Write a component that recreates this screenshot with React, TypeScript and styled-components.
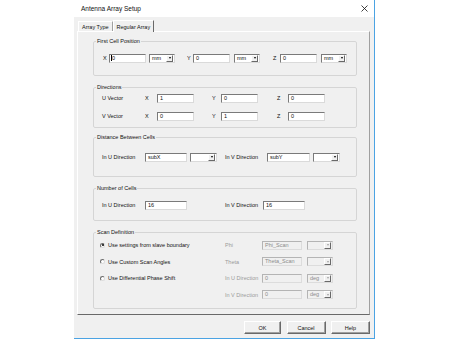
import React from "react";
import styled, { createGlobalStyle } from "styled-components";

const GlobalStyle = createGlobalStyle`
  html, body {
    margin: 0;
    padding: 0;
    background: #fff;
  }
  body {
    font-family: "Liberation Sans", Arial, sans-serif;
    font-size: 5.5px;
    color: #111;
  }
  * {
    box-sizing: border-box;
  }
`;

const Stage = styled.div`
  width: 450px;
  height: 339px;
  padding-left: 74px;
  display: flex;
  overflow: hidden;
`;

const Dialog = styled.div`
  width: 301px;
  height: 339px;
  background: #f0f0f0;
  border-right: 1px solid #4ba3e3;
  border-bottom: 1px solid #4ba3e3;
  display: flex;
  flex-direction: column;
`;

const TitleBar = styled.div`
  height: 17px;
  flex: none;
  background: #fff;
  display: flex;
  align-items: center;
  justify-content: space-between;
  padding: 0 6px 0 7px;
`;

const Title = styled.span`
  font-size: 6.5px;
  line-height: 8px;
`;

const TabStrip = styled.div`
  height: 14px;
  flex: none;
  display: flex;
  align-items: flex-end;
  padding-left: 4px;
`;

const Tab = styled.div<{ $active?: boolean }>`
  height: ${(p) => (p.$active ? 12 : 10)}px;
  padding: 0 3px;
  display: flex;
  align-items: center;
  line-height: 8px;
  white-space: nowrap;
  border-top: 1px solid #fff;
  border-left: 1px solid #fff;
  border-right: 1px solid ${(p) => (p.$active ? "#696969" : "#a0a0a0")};
  margin-bottom: ${(p) => (p.$active ? -1 : 0)}px;
  background: #f0f0f0;
  position: relative;
`;

const Panel = styled.div`
  height: 284px;
  flex: none;
  margin: 0 4px 0 3px;
  border-top: 1px solid #fff;
  border-left: 1px solid #fff;
  border-right: 1px solid #a0a0a0;
  border-bottom: 1px solid #696969;
  padding: 5px 12px 0 15px;
  display: flex;
  flex-direction: column;
`;

const Group = styled.fieldset<{ $h: number; $mt: number; $pt: number }>`
  margin: ${(p) => p.$mt}px 0 0 0;
  height: ${(p) => p.$h}px;
  min-width: 0;
  padding: ${(p) => p.$pt}px 0 0 0;
  border: 1px solid #d5d5d5;
  border-radius: 2px;
  flex: none;
`;

const Legend = styled.legend`
  margin-left: 2px;
  padding: 0 1px;
  line-height: 8px;
  font-size: 5.5px;
`;

const Rows = styled.div<{ $gap?: number; $pl: number }>`
  display: flex;
  flex-direction: column;
  gap: ${(p) => p.$gap ?? 0}px;
  padding-left: ${(p) => p.$pl}px;
`;

const Row = styled.div`
  height: 10px;
  display: flex;
  align-items: center;
`;

const Label = styled.span<{ $w: number; $ml?: number; $off?: boolean }>`
  width: ${(p) => p.$w}px;
  margin-left: ${(p) => p.$ml ?? 0}px;
  flex: none;
  white-space: nowrap;
  line-height: 8px;
  color: ${(p) => (p.$off ? "#9a9a9a" : "#111")};
`;

const TextBox = styled.div<{ $w: number; $ml?: number; $off?: boolean; $focus?: boolean }>`
  width: ${(p) => p.$w}px;
  margin-left: ${(p) => p.$ml ?? 0}px;
  height: 9px;
  flex: none;
  background: ${(p) => (p.$off ? "#f0f0f0" : "#fff")};
  border: 1px solid;
  border-color: ${(p) =>
    p.$off ? "#b4b4b4 #dcdcdc #dcdcdc #b4b4b4" : "#7a7a7a #dadada #dadada #7a7a7a"};
  color: ${(p) => (p.$off ? "#8c8c8c" : "#111")};
  padding-left: ${(p) => (p.$focus ? 1 : 2)}px;
  line-height: 7px;
  white-space: nowrap;
  overflow: hidden;
  display: flex;
  align-items: center;

  &::before {
    content: "";
    display: ${(p) => (p.$focus ? "block" : "none")};
    width: 1px;
    height: 6px;
    background: #000;
  }
`;

const Combo = styled.div<{ $w: number; $ml?: number; $off?: boolean }>`
  width: ${(p) => p.$w}px;
  margin-left: ${(p) => p.$ml ?? 0}px;
  height: 9px;
  flex: none;
  background: ${(p) => (p.$off ? "#f0f0f0" : "#fff")};
  border: 1px solid;
  border-color: ${(p) =>
    p.$off ? "#b4b4b4 #dcdcdc #dcdcdc #b4b4b4" : "#7a7a7a #dadada #dadada #7a7a7a"};
  color: ${(p) => (p.$off ? "#8c8c8c" : "#111")};
  display: flex;
  align-items: center;
  justify-content: space-between;
  padding: 0 1px 0 2px;
  line-height: 7px;
`;

const DropButton = styled.div<{ $off?: boolean }>`
  width: 7px;
  height: 7px;
  background: #f0f0f0;
  border: 1px solid;
  border-color: #fff #696969 #696969 #fff;
  display: flex;
  align-items: center;
  justify-content: center;

  &::after {
    content: "";
    border-left: 1.5px solid transparent;
    border-right: 1.5px solid transparent;
    border-top: 2px solid ${(p) => (p.$off ? "#a0a0a0" : "#000")};
  }
`;

const Radio = styled.span<{ $on?: boolean }>`
  width: 5px;
  height: 5px;
  flex: none;
  border-radius: 50%;
  background: #fff;
  border: 1px solid;
  border-color: #6a6a6a #dcdcdc #dcdcdc #6a6a6a;
  margin-right: 3px;
  display: flex;
  align-items: center;
  justify-content: center;

  &::after {
    content: "";
    display: ${(p) => (p.$on ? "block" : "none")};
    width: 2px;
    height: 2px;
    border-radius: 50%;
    background: #000;
  }
`;

const ScanGrid = styled.div`
  display: grid;
  grid-template-columns: 125px 1fr;
  grid-template-rows: repeat(4, 10px);
  row-gap: 6.67px;
  padding-left: 6px;
`;

const Cell = styled.div<{ $col: number; $row: number }>`
  grid-column: ${(p) => p.$col};
  grid-row: ${(p) => p.$row};
  display: flex;
  align-items: center;
  white-space: nowrap;
  line-height: 8px;
`;

const ButtonBar = styled.div`
  flex: 1;
  display: flex;
  justify-content: flex-end;
  align-items: flex-start;
  gap: 5.5px;
  padding: 6px 4px 0 0;
`;

const Button = styled.div<{ $w: number }>`
  width: ${(p) => p.$w}px;
  height: 13px;
  background: #f0f0f0;
  border: 1px solid;
  border-color: #fff #696969 #696969 #fff;
  box-shadow: inset -1px -1px 0 #a0a0a0;
  display: flex;
  align-items: center;
  justify-content: center;
  line-height: 8px;
`;

function Close() {
  return (
    <svg width="7" height="7" viewBox="0 0 7 7">
      <path d="M0.5 0.5 L6.5 6.5 M6.5 0.5 L0.5 6.5" stroke="#111" strokeWidth="0.8" />
    </svg>
  );
}

function Select({ w, ml, value = "", off }: { w: number; ml?: number; value?: string; off?: boolean }) {
  return (
    <Combo $w={w} $ml={ml} $off={off}>
      <span>{value}</span>
      <DropButton $off={off} />
    </Combo>
  );
}

export default function App() {
  return (
    <>
      <GlobalStyle />
      <Stage>
        <Dialog>
          <TitleBar>
            <Title>Antenna Array Setup</Title>
            <Close />
          </TitleBar>
          <TabStrip>
            <Tab>Array Type</Tab>
            <Tab $active>Regular Array</Tab>
          </TabStrip>
          <Panel>
            <Group $h={39} $mt={0} $pt={8}>
              <Legend>First Cell Position</Legend>
              <Rows $pl={9}>
                <Row>
                  <Label $w={6}>X</Label>
                  <TextBox $w={37} $focus>0</TextBox>
                  <Select w={26} ml={3} value="mm" />
                  <Label $w={6} $ml={12}>Y</Label>
                  <TextBox $w={37}>0</TextBox>
                  <Select w={26} ml={4} value="mm" />
                  <Label $w={7} $ml={13}>Z</Label>
                  <TextBox $w={37}>0</TextBox>
                  <Select w={26} ml={4} value="mm" />
                </Row>
              </Rows>
            </Group>

            <Group $h={45} $mt={7} $pt={2}>
              <Legend>Directions</Legend>
              <Rows $gap={8} $pl={8}>
                <Row>
                  <Label $w={43}>U Vector</Label>
                  <Label $w={12}>X</Label>
                  <TextBox $w={37}>1</TextBox>
                  <Label $w={9} $ml={18}>Y</Label>
                  <TextBox $w={37}>0</TextBox>
                  <Label $w={11} $ml={19}>Z</Label>
                  <TextBox $w={37}>0</TextBox>
                </Row>
                <Row>
                  <Label $w={43}>V Vector</Label>
                  <Label $w={12}>X</Label>
                  <TextBox $w={37}>0</TextBox>
                  <Label $w={9} $ml={18}>Y</Label>
                  <TextBox $w={37}>1</TextBox>
                  <Label $w={11} $ml={19}>Z</Label>
                  <TextBox $w={37}>0</TextBox>
                </Row>
              </Rows>
            </Group>

            <Group $h={44} $mt={5} $pt={11}>
              <Legend>Distance Between Cells</Legend>
              <Rows $pl={8}>
                <Row>
                  <Label $w={43}>In U Direction</Label>
                  <TextBox $w={42}>subX</TextBox>
                  <Select w={27} ml={3} />
                  <Label $w={42} $ml={8}>In V Direction</Label>
                  <TextBox $w={43}>subY</TextBox>
                  <Select w={27} ml={3} />
                </Row>
              </Rows>
            </Group>

            <Group $h={37} $mt={7} $pt={8}>
              <Legend>Number of Cells</Legend>
              <Rows $pl={8}>
                <Row>
                  <Label $w={43}>In U Direction</Label>
                  <TextBox $w={42}>16</TextBox>
                  <Label $w={38} $ml={38}>In V Direction</Label>
                  <TextBox $w={42}>16</TextBox>
                </Row>
              </Rows>
            </Group>

            <Group $h={81} $mt={7} $pt={4}>
              <Legend>Scan Definition</Legend>
              <ScanGrid>
                <Cell $col={1} $row={1}>
                  <Radio $on />
                  Use settings from slave boundary
                </Cell>
                <Cell $col={1} $row={2}>
                  <Radio />
                  Use Custom Scan Angles
                </Cell>
                <Cell $col={1} $row={3}>
                  <Radio />
                  Use Differential Phase Shift
                </Cell>
                <Cell $col={2} $row={1}>
                  <Label $w={37} $off>Phi</Label>
                  <TextBox $w={40} $off>Phi_Scan</TextBox>
                  <Select w={26} ml={5} off />
                </Cell>
                <Cell $col={2} $row={2}>
                  <Label $w={37} $off>Theta</Label>
                  <TextBox $w={40} $off>Theta_Scan</TextBox>
                  <Select w={26} ml={5} off />
                </Cell>
                <Cell $col={2} $row={3}>
                  <Label $w={37} $off>In U Direction</Label>
                  <TextBox $w={40} $off>0</TextBox>
                  <Select w={26} ml={5} value="deg" off />
                </Cell>
                <Cell $col={2} $row={4}>
                  <Label $w={37} $off>In V Direction</Label>
                  <TextBox $w={40} $off>0</TextBox>
                  <Select w={26} ml={5} value="deg" off />
                </Cell>
              </ScanGrid>
            </Group>
          </Panel>
          <ButtonBar>
            <Button $w={37}>OK</Button>
            <Button $w={39}>Cancel</Button>
            <Button $w={39}>Help</Button>
          </ButtonBar>
        </Dialog>
      </Stage>
    </>
  );
}
